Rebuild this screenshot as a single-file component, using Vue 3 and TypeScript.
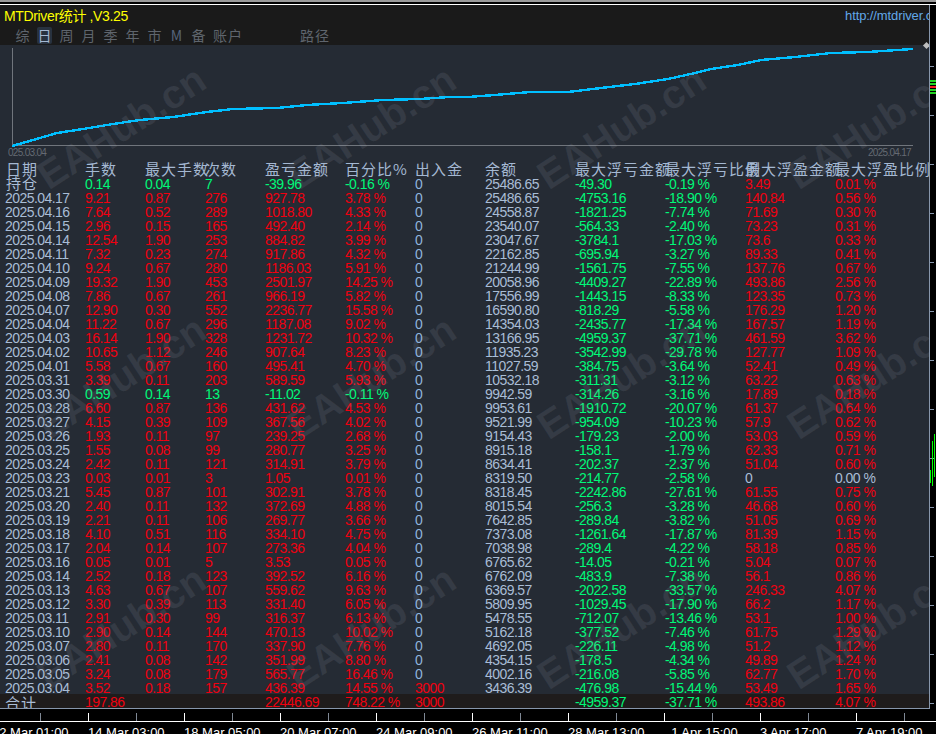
<script setup lang="ts">
type Row = string[]

// date, lots, max lots, count, pnl, pct, in/out, balance, float loss, loss %, float profit, profit %
const rows: Row[] = [
  ['2025.04.17', '9.21', '0.87', '276', '927.78', '3.78 %', '0', '25486.65', '-4753.16', '-18.90 %', '140.84', '0.56 %'],
  ['2025.04.16', '7.64', '0.52', '289', '1018.80', '4.33 %', '0', '24558.87', '-1821.25', '-7.74 %', '71.69', '0.30 %'],
  ['2025.04.15', '2.96', '0.15', '165', '492.40', '2.14 %', '0', '23540.07', '-564.33', '-2.40 %', '73.23', '0.31 %'],
  ['2025.04.14', '12.54', '1.90', '253', '884.82', '3.99 %', '0', '23047.67', '-3784.1', '-17.03 %', '73.6', '0.33 %'],
  ['2025.04.11', '7.32', '0.23', '274', '917.86', '4.32 %', '0', '22162.85', '-695.94', '-3.27 %', '89.33', '0.41 %'],
  ['2025.04.10', '9.24', '0.67', '280', '1186.03', '5.91 %', '0', '21244.99', '-1561.75', '-7.55 %', '137.76', '0.67 %'],
  ['2025.04.09', '19.32', '1.90', '453', '2501.97', '14.25 %', '0', '20058.96', '-4409.27', '-22.89 %', '493.86', '2.56 %'],
  ['2025.04.08', '7.86', '0.67', '261', '966.19', '5.82 %', '0', '17556.99', '-1443.15', '-8.33 %', '123.35', '0.73 %'],
  ['2025.04.07', '12.90', '0.30', '552', '2236.77', '15.58 %', '0', '16590.80', '-818.29', '-5.58 %', '176.29', '1.20 %'],
  ['2025.04.04', '11.22', '0.67', '296', '1187.08', '9.02 %', '0', '14354.03', '-2435.77', '-17.34 %', '167.57', '1.19 %'],
  ['2025.04.03', '16.14', '1.90', '328', '1231.72', '10.32 %', '0', '13166.95', '-4959.37', '-37.71 %', '461.59', '3.62 %'],
  ['2025.04.02', '10.65', '1.12', '246', '907.64', '8.23 %', '0', '11935.23', '-3542.99', '-29.78 %', '127.77', '1.09 %'],
  ['2025.04.01', '5.58', '0.67', '160', '495.41', '4.70 %', '0', '11027.59', '-384.75', '-3.64 %', '52.41', '0.49 %'],
  ['2025.03.31', '3.39', '0.11', '203', '589.59', '5.93 %', '0', '10532.18', '-311.31', '-3.12 %', '63.22', '0.63 %'],
  ['2025.03.30', '0.59', '0.14', '13', '-11.02', '-0.11 %', '0', '9942.59', '-314.26', '-3.16 %', '17.89', '0.18 %'],
  ['2025.03.28', '6.60', '0.87', '136', '431.62', '4.53 %', '0', '9953.61', '-1910.72', '-20.07 %', '61.37', '0.64 %'],
  ['2025.03.27', '4.15', '0.39', '109', '367.56', '4.02 %', '0', '9521.99', '-954.09', '-10.23 %', '57.9', '0.62 %'],
  ['2025.03.26', '1.93', '0.11', '97', '239.25', '2.68 %', '0', '9154.43', '-179.23', '-2.00 %', '53.03', '0.59 %'],
  ['2025.03.25', '1.55', '0.08', '99', '280.77', '3.25 %', '0', '8915.18', '-158.1', '-1.79 %', '62.33', '0.71 %'],
  ['2025.03.24', '2.42', '0.11', '121', '314.91', '3.79 %', '0', '8634.41', '-202.37', '-2.37 %', '51.04', '0.60 %'],
  ['2025.03.23', '0.03', '0.01', '3', '1.05', '0.01 %', '0', '8319.50', '-214.77', '-2.58 %', '0', '0.00 %'],
  ['2025.03.21', '5.45', '0.87', '101', '302.91', '3.78 %', '0', '8318.45', '-2242.86', '-27.61 %', '61.55', '0.75 %'],
  ['2025.03.20', '2.40', '0.11', '132', '372.69', '4.88 %', '0', '8015.54', '-256.3', '-3.28 %', '46.68', '0.60 %'],
  ['2025.03.19', '2.21', '0.11', '106', '269.77', '3.66 %', '0', '7642.85', '-289.84', '-3.82 %', '51.05', '0.69 %'],
  ['2025.03.18', '4.10', '0.51', '116', '334.10', '4.75 %', '0', '7373.08', '-1261.64', '-17.87 %', '81.39', '1.15 %'],
  ['2025.03.17', '2.04', '0.14', '107', '273.36', '4.04 %', '0', '7038.98', '-289.4', '-4.22 %', '58.18', '0.85 %'],
  ['2025.03.16', '0.05', '0.01', '5', '3.53', '0.05 %', '0', '6765.62', '-14.05', '-0.21 %', '5.04', '0.07 %'],
  ['2025.03.14', '2.52', '0.18', '123', '392.52', '6.16 %', '0', '6762.09', '-483.9', '-7.38 %', '56.1', '0.86 %'],
  ['2025.03.13', '4.63', '0.67', '107', '559.62', '9.63 %', '0', '6369.57', '-2022.58', '-33.57 %', '246.33', '4.07 %'],
  ['2025.03.12', '3.30', '0.39', '113', '331.40', '6.05 %', '0', '5809.95', '-1029.45', '-17.90 %', '66.2', '1.17 %'],
  ['2025.03.11', '2.91', '0.30', '99', '316.37', '6.13 %', '0', '5478.55', '-712.07', '-13.46 %', '53.1', '1.00 %'],
  ['2025.03.10', '2.90', '0.14', '144', '470.13', '10.02 %', '0', '5162.18', '-377.52', '-7.46 %', '61.75', '1.29 %'],
  ['2025.03.07', '2.80', '0.11', '170', '337.90', '7.76 %', '0', '4692.05', '-226.11', '-4.98 %', '51.2', '1.12 %'],
  ['2025.03.06', '2.41', '0.08', '142', '351.99', '8.80 %', '0', '4354.15', '-178.5', '-4.34 %', '49.89', '1.24 %'],
  ['2025.03.05', '3.24', '0.08', '179', '565.77', '16.46 %', '0', '4002.16', '-216.08', '-5.85 %', '62.77', '1.70 %'],
  ['2025.03.04', '3.52', '0.18', '157', '436.39', '14.55 %', '3000', '3436.39', '-476.98', '-15.44 %', '53.49', '1.65 %'],
]

const open: Row = ['持仓', '0.14', '0.04', '7', '-39.96', '-0.16 %', '0', '25486.65', '-49.30', '-0.19 %', '3.49', '0.01 %']
const total: Row = ['合计', '197.86', '', '', '22446.69', '748.22 %', '3000', '', '-4959.37', '-37.71 %', '493.86', '4.07 %']

const heads = ['日期', '手数', '最大手数', '次数', '盈亏金额', '百分比%', '出入金', '余额', '最大浮亏金额', '最大浮亏比例', '最大浮盈金额', '最大浮盈比例']
const tabs = ['综', '日', '周', '月', '季', '年', '市', 'M', '备', '账户']

// 0,6,7 stay neutral; the others follow the sign of their value
function cellClass(v: string, i: number) {
  if (i === 0) return 'c-date'
  if (i === 6) return v === '0' ? 'c-zero' : 'c-red'
  if (i === 7) return 'c-date'
  if (v === '0' || v === '0.00 %') return 'c-date'
  if (v.startsWith('-')) return 'c-green'
  return 'c-red'
}

// the first columns of a losing day are all green
function rowClass(r: Row, v: string, i: number) {
  if (i >= 1 && i <= 3 && r[4].startsWith('-')) return 'c-green'
  return cellClass(v, i)
}

const curve = [
  [12, 146], [33, 140], [57, 133], [83, 129], [113, 124], [140, 120], [173, 117], [207, 112], [233, 109],
  [277, 108], [307, 105], [343, 103], [383, 100], [420, 99], [450, 97], [468, 97], [495, 95], [531, 92],
  [568, 92], [601, 88], [635, 84], [668, 79], [695, 73], [711, 69], [738, 65], [761, 60], [795, 57],
  [831, 53], [868, 52], [913, 49],
]
const curvePoints = curve.map(([x, y]) => `${x},${y - 45}`).join(' ')

const priceTicks = Array.from({ length: 14 }, (_, i) => 61 + i * 49)
const marks = Array.from({ length: 12 })

const timeLabels = ['12 Mar 01:00', '14 Mar 03:00', '18 Mar 05:00', '20 Mar 07:00', '24 Mar 09:00', '26 Mar 11:00', '28 Mar 13:00', '\u00a0\u00a01 Apr 15:00', '3 Apr 17:00', '7 Apr 19:00']
</script>

<template>
  <div class="screen">
    <div class="top-strip"></div>
    <div class="body">
      <div class="panel">
        <header class="bar">
          <div class="title-row">
            <span class="title">MTDriver统计 ,V3.25</span>
            <span class="url">http://mtdriver.com</span>
          </div>
          <nav class="tabs">
            <span v-for="t in tabs" :key="t" class="tab" :class="{ active: t === '日', wide: t === '账户', latin: t === 'M' }">{{ t }}</span>
            <span class="tab path">路径</span>
          </nav>
        </header>

        <section class="chart">
          <svg class="curve" width="929" height="117" viewBox="0 0 929 117">
            <path d="M12.5 3V100.5H913" fill="none" stroke="#70757c" stroke-width="1" shape-rendering="crispEdges" />
            <polyline :points="curvePoints" fill="none" stroke="#00bfff" stroke-width="2.4" shape-rendering="crispEdges" />
          </svg>
          <div class="chart-dates">
            <span>025.03.04</span>
            <span>2025.04.17</span>
          </div>
        </section>

        <div class="table">
          <div class="row head">
            <span v-for="h in heads" :key="h">{{ h }}</span>
          </div>
          <div class="row first">
            <span v-for="(v, i) in open" :key="i" :class="[rowClass(open, v, i), { cjk: i === 0 }]">{{ v }}</span>
          </div>
          <div v-for="r in rows" :key="r[0]" class="row">
            <span v-for="(v, i) in r" :key="i" :class="rowClass(r, v, i)">{{ v }}</span>
          </div>
          <div class="row total">
            <span v-for="(v, i) in total" :key="i" :class="[cellClass(v, i), { cjk: i === 0 }]">{{ v }}</span>
          </div>
        </div>

        <div class="marks" aria-hidden="true">
          <div v-for="(_, i) in marks" :key="i" class="mark-cell"><span class="mark">EAHub.cn</span></div>
        </div>
        <i class="grip"></i>
      </div>

      <aside class="price-axis">
        <i v-for="t in priceTicks" :key="t" class="price-tick" :style="{ top: t + 'px' }"></i>
        <svg class="candles" width="6" height="60" viewBox="0 0 6 60" shape-rendering="crispEdges">
          <path d="M0 35h6M0 38h6M0 44h6M0 47h6" stroke="#22d422" stroke-width="2" />
          <path d="M0 41h6" stroke="#f02020" stroke-width="2" />
        </svg>
        <svg class="bars" width="6" height="56" viewBox="0 0 6 56" shape-rendering="crispEdges">
          <path d="M.5 37V50M2.5 8V53M4.5 1V44" stroke="#00ff00" stroke-width="1" />
        </svg>
      </aside>
    </div>

    <footer class="time-axis">
      <div class="ticks">
        <i v-for="n in 19" :key="n" class="tick" :class="{ major: n % 2 === 0 }"></i>
      </div>
      <div class="labels">
        <span v-for="l in timeLabels" :key="l">{{ l }}</span>
      </div>
    </footer>
  </div>
</template>

<style scoped>
.screen {
  width: 936px;
  height: 734px;
  overflow: hidden;
  background: #000;
  display: flex;
  flex-direction: column;
  font-family: "Liberation Sans", "Noto Sans CJK SC", sans-serif;
}

.top-strip {
  height: 4px;
  flex: none;
  background: linear-gradient(#9a9a9a 0 2px, #000 2px);
  border-bottom: 1px solid #fff;
  box-sizing: content-box;
}

.body {
  flex: none;
  height: 704px;
  display: flex;
}

.panel {
  position: relative;
  width: 930px;
  flex: none;
  background: #252b34;
  display: flex;
  flex-direction: column;
  overflow: hidden;
  border-right: 1px solid #8796ab;
  border-bottom: 1px solid #8796ab;
  box-sizing: border-box;
}

.bar {
  height: 40px;
  flex: none;
  background: #1a1a1a;
}

.title-row {
  height: 20px;
  display: flex;
  justify-content: space-between;
  align-items: center;
  padding-left: 4px;
  white-space: nowrap;
}

.title {
  color: #ffff00;
  font-size: 14px;
  letter-spacing: -0.35px;
}

.url {
  color: #62a8e8;
  font-size: 13px;
  letter-spacing: -0.1px;
  width: 84px;
  overflow: hidden;
}

.tabs {
  height: 20px;
  display: flex;
  align-items: center;
  padding-left: 15px;
  gap: 7px;
  font-family: "Noto Sans CJK SC", sans-serif;
}

.tab {
  width: 15px;
  height: 17px;
  line-height: 17px;
  text-align: center;
  font-size: 14px;
  color: #5f656d;
  border-radius: 2px;
}

.tab.active {
  background: #28323f;
  color: #a4b8d2;
}

.tab.latin {
  color: #56647a;
}

.tab.wide {
  width: 30px;
  letter-spacing: 1px;
}

.tab.path {
  width: 30px;
  margin-left: 50px;
  letter-spacing: 1px;
}

.chart {
  height: 117px;
  flex: none;
  position: relative;
  display: flex;
  flex-direction: column;
}

.curve {
  display: block;
  position: absolute;
  top: 0;
  left: 0;
}

.chart-dates {
  margin-top: auto;
  height: 13px;
  display: flex;
  justify-content: space-between;
  padding: 0 18px 3px 8px;
  color: #646a73;
  font-size: 10px;
  letter-spacing: -0.7px;
  line-height: 13px;
}

.table {
  flex: 1;
}

.row {
  display: grid;
  grid-template-columns: 85px 60px 60px 60px 80px 70px 70px 90px 90px 80px 90px 94px;
  height: 14px;
  font-size: 14px;
  letter-spacing: -0.55px;
  line-height: 14px;
  white-space: nowrap;
}

.row span {
  overflow: visible;
}

.row span:first-child {
  padding-left: 5px;
}

.head {
  height: 15px;
  line-height: 13px;
  font-size: 15px;
  letter-spacing: 1px;
  color: #a4b8d2;
  font-family: "Noto Sans CJK SC", sans-serif;
}

.head span:first-child {
  padding-left: 6px;
}

.first span:first-child {
  padding-left: 6px;
}

.cjk {
  font-family: "Noto Sans CJK SC", sans-serif;
  font-size: 15px;
  letter-spacing: 1px;
  color: #c0cfe2;
}

.first .cjk {
  line-height: 12px;
}

.total {
  background: #1f1c1c;
  margin-top: -1px;
  height: 14px;
  line-height: 17px;
}

.c-date { color: #a9bdd6; }
.c-zero { color: #8fb4dd; }
.c-red { color: #f00010; }
.c-green { color: #00f878; }

.marks {
  position: absolute;
  top: -3px;
  left: -3px;
  display: grid;
  grid-template-columns: repeat(4, 250px);
  grid-auto-rows: 250px;
  pointer-events: none;
}

.mark-cell {
  display: flex;
  align-items: center;
  justify-content: center;
}

.mark {
  font-size: 40px;
  font-weight: 700;
  color: rgba(170, 178, 195, 0.12);
  transform: rotate(-33deg);
}

.grip {
  position: absolute;
  top: 38px;
  right: 0;
  width: 5px;
  height: 5px;
  background: #bdbdbd;
  transform: rotate(45deg);
}

.price-axis {
  position: relative;
  width: 6px;
  flex: none;
  overflow: hidden;
}

.price-tick {
  position: absolute;
  left: 0;
  width: 4px;
  height: 1px;
  background: #8796ab;
}

.candles {
  position: absolute;
  top: 41px;
  left: 0;
}

.bars {
  position: absolute;
  top: 428px;
  left: 0;
}

.time-axis {
  flex: none;
  height: 25px;
}

.ticks {
  height: 13px;
  display: flex;
  padding-left: 40px;
  gap: 47px;
  border-bottom: 1px solid #fff;
  box-sizing: border-box;
  align-items: flex-end;
}

.tick {
  width: 1px;
  height: 8px;
  flex: none;
  background: #7f8894;
}

.tick.major {
  background: #fff;
}

.labels {
  display: flex;
  margin-left: -8px;
  margin-top: 4px;
  color: #fff;
  font-size: 13px;
  line-height: 14px;
  white-space: nowrap;
}

.labels span {
  width: 96px;
  flex: none;
}
</style>
